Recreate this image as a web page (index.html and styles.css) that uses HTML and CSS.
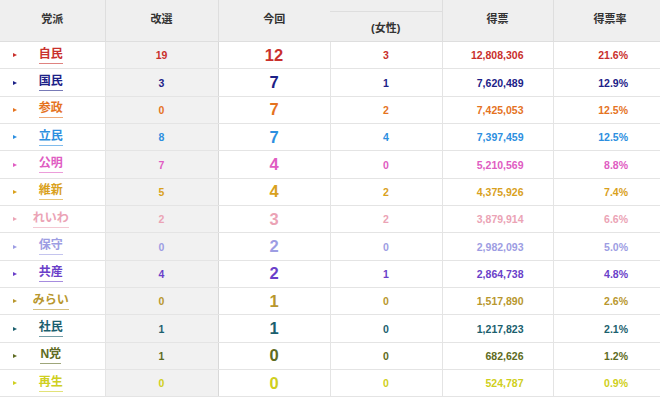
FILE: index.html
```html
<!DOCTYPE html>
<html lang="ja">
<head>
  <meta charset="UTF-8">
  <meta name="viewport" content="width=device-width, initial-scale=1.0">
  <title>党派別 当選者数・得票</title>
  <link rel="stylesheet" href="styles.css">
</head>
<body>
  <div class="wrap">
    <table class="result">
      <colgroup>
        <col class="c-party">
        <col class="c-kaisen">
        <col class="c-now">
        <col class="c-women">
        <col class="c-votes">
        <col class="c-rate">
      </colgroup>
      <thead>
        <tr class="head-top">
          <th rowspan="2" class="h-main">党派</th>
          <th rowspan="2" class="h-main">改選</th>
          <th rowspan="2" class="h-main h-now">今回</th>
          <th class="h-gap"></th>
          <th rowspan="2" class="h-main">得票</th>
          <th rowspan="2" class="h-main">得票率</th>
        </tr>
        <tr class="head-sub">
          <th class="h-women">(女性)</th>
        </tr>
      </thead>
      <tbody>
        <!-- 党派ごとの行 -->
        <tr class="p-jimin">
          <td class="party"><div class="party-in"><i class="tri"></i><span class="name">自民</span></div></td>
          <td class="kaisen">19</td><td class="now">12</td><td class="women">3</td>
          <td class="votes">12,808,306</td><td class="rate">21.6%</td>
        </tr>
        <tr class="p-kokumin">
          <td class="party"><div class="party-in"><i class="tri"></i><span class="name">国民</span></div></td>
          <td class="kaisen">3</td><td class="now">7</td><td class="women">1</td>
          <td class="votes">7,620,489</td><td class="rate">12.9%</td>
        </tr>
        <tr class="p-sansei">
          <td class="party"><div class="party-in"><i class="tri"></i><span class="name">参政</span></div></td>
          <td class="kaisen">0</td><td class="now">7</td><td class="women">2</td>
          <td class="votes">7,425,053</td><td class="rate">12.5%</td>
        </tr>
        <tr class="p-rikken">
          <td class="party"><div class="party-in"><i class="tri"></i><span class="name">立民</span></div></td>
          <td class="kaisen">8</td><td class="now">7</td><td class="women">4</td>
          <td class="votes">7,397,459</td><td class="rate">12.5%</td>
        </tr>
        <tr class="p-komei">
          <td class="party"><div class="party-in"><i class="tri"></i><span class="name">公明</span></div></td>
          <td class="kaisen">7</td><td class="now">4</td><td class="women">0</td>
          <td class="votes">5,210,569</td><td class="rate">8.8%</td>
        </tr>
        <tr class="p-ishin">
          <td class="party"><div class="party-in"><i class="tri"></i><span class="name">維新</span></div></td>
          <td class="kaisen">5</td><td class="now">4</td><td class="women">2</td>
          <td class="votes">4,375,926</td><td class="rate">7.4%</td>
        </tr>
        <tr class="p-reiwa">
          <td class="party"><div class="party-in"><i class="tri"></i><span class="name">れいわ</span></div></td>
          <td class="kaisen">2</td><td class="now">3</td><td class="women">2</td>
          <td class="votes">3,879,914</td><td class="rate">6.6%</td>
        </tr>
        <tr class="p-hoshu">
          <td class="party"><div class="party-in"><i class="tri"></i><span class="name">保守</span></div></td>
          <td class="kaisen">0</td><td class="now">2</td><td class="women">0</td>
          <td class="votes">2,982,093</td><td class="rate">5.0%</td>
        </tr>
        <tr class="p-kyosan">
          <td class="party"><div class="party-in"><i class="tri"></i><span class="name">共産</span></div></td>
          <td class="kaisen">4</td><td class="now">2</td><td class="women">1</td>
          <td class="votes">2,864,738</td><td class="rate">4.8%</td>
        </tr>
        <tr class="p-mirai">
          <td class="party"><div class="party-in"><i class="tri"></i><span class="name">みらい</span></div></td>
          <td class="kaisen">0</td><td class="now">1</td><td class="women">0</td>
          <td class="votes">1,517,890</td><td class="rate">2.6%</td>
        </tr>
        <tr class="p-shamin">
          <td class="party"><div class="party-in"><i class="tri"></i><span class="name">社民</span></div></td>
          <td class="kaisen">1</td><td class="now">1</td><td class="women">0</td>
          <td class="votes">1,217,823</td><td class="rate">2.1%</td>
        </tr>
        <tr class="p-nto">
          <td class="party"><div class="party-in"><i class="tri"></i><span class="name">N党</span></div></td>
          <td class="kaisen">1</td><td class="now">0</td><td class="women">0</td>
          <td class="votes">682,626</td><td class="rate">1.2%</td>
        </tr>
        <tr class="p-saisei">
          <td class="party"><div class="party-in"><i class="tri"></i><span class="name">再生</span></div></td>
          <td class="kaisen">0</td><td class="now">0</td><td class="women">0</td>
          <td class="votes">524,787</td><td class="rate">0.9%</td>
        </tr>
      </tbody>
    </table>
  </div>
</body>
</html>
```

FILE: styles.css
```css
* {
  box-sizing: border-box;
}
html, body {
  margin: 0;
  padding: 0;
  background: #fff;
  overflow: hidden;
}
body {
  font-family: "Liberation Sans", Arial, "Noto Sans CJK JP", sans-serif;
}
.wrap {
  width: 660px;
  overflow: hidden;
}
.result {
  width: 667px;
  table-layout: fixed;
  border-collapse: collapse;
  font-weight: bold;
}
.c-party { width: 105px; }
.c-kaisen { width: 113px; }
.c-now { width: 112px; }
.c-women { width: 112px; }
.c-votes { width: 111px; }
.c-rate { width: 114px; }

/* ヘッダー */
.result th {
  background: #efefef;
  color: #333;
  font-size: 11px;
  font-weight: bold;
  text-align: center;
  padding: 0;
  border: 1px solid #dedede;
  border-top: none;
}
.result th:first-child {
  border-left: none;
}
.head-top {
  height: 11px;
}
.head-sub {
  height: 30.5px;
}
.h-main {
  vertical-align: middle;
  padding-bottom: 5px !important;
}
.result .h-now {
  border-right: none;
}
.result .h-gap {
  border-left: none;
  border-bottom: none;
}
.result .h-women {
  border-top: 1px solid #dedede;
  border-left: 1px solid #dedede;
  padding-top: 1px;
}

/* 本文 */
.result tbody tr {
  height: 27.35px;
  color: var(--c);
}
.result td {
  padding: 0;
  border-bottom: 1px solid #e4e4e4;
  border-left: 1px solid #e4e4e4;
  font-size: 10.5px;
  text-align: center;
  vertical-align: middle;
}
.result td.party {
  border-left: none;
}
.result td.kaisen {
  background: #f1f1f1;
}
.result td.now {
  font-size: 16.5px;
  border-left-color: #d8d8d8;
}
.result td.votes {
  text-align: right;
  padding-right: 29px;
}
.result td.rate {
  text-align: right;
  padding-right: 39px;
}

/* 党派名 */
.party-in {
  display: grid;
  grid-template-columns: 26px 1fr 29px;
  align-items: center;
}
.tri {
  justify-self: start;
  margin-left: 13px;
  width: 0;
  height: 0;
  border-left: 4px solid var(--c);
  border-top: 2.5px solid transparent;
  border-bottom: 2.5px solid transparent;
}
.name {
  justify-self: center;
  font-size: 12px;
  line-height: 14px;
  padding-bottom: 2px;
  border-bottom: 1px solid color-mix(in srgb, var(--c) 60%, transparent);
}

/* 党派カラー */
.p-jimin { --c: #c9302c; }
.p-kokumin { --c: #1c2187; }
.p-sansei { --c: #e5731f; }
.p-rikken { --c: #2d8fe0; }
.p-komei { --c: #e05cc2; }
.p-ishin { --c: #d9a11d; }
.p-reiwa { --c: #eba3b5; }
.p-hoshu { --c: #9d9de3; }
.p-kyosan { --c: #6a3fc9; }
.p-mirai { --c: #b8972e; }
.p-shamin { --c: #1b5f6e; }
.p-nto { --c: #5e6b22; }
.p-saisei { --c: #cfcf20; }
```
